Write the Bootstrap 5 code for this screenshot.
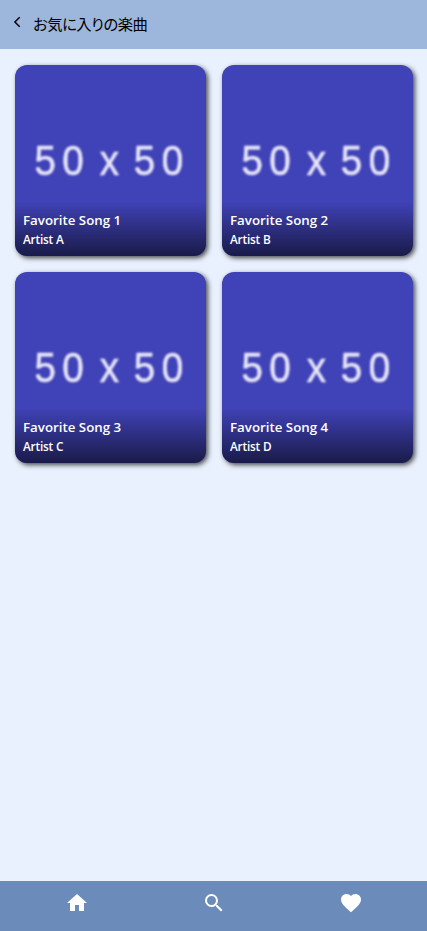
<!DOCTYPE html>
<html lang="ja">
<head>
<meta charset="utf-8">
<meta name="viewport" content="width=device-width, initial-scale=1">
<title>お気に入りの楽曲</title>
<link href="https://cdn.jsdelivr.net/npm/bootstrap@5.3.0/dist/css/bootstrap.min.css" rel="stylesheet">
<style>
body { background: #e9f1fe; font-family: "Open Sans", "Noto Sans", "Noto Sans CJK JP", sans-serif; }
.topbar { height: 49px; background: #9db6db; padding-left: 13px; color: #000; }
.back-icon { width: 8px; height: 12px; margin-top: -5px; }
.page-title { font: 400 15.3px/24px "Noto Sans CJK JP", sans-serif; font-feature-settings: "palt"; margin: -4px 0 0 12px; letter-spacing: -.45px; }
.songs { padding: 16px 14px 0 15px; }
.song-grid { display: grid; grid-template-columns: 191px 191px; gap: 16px; }
.song { height: 191px; border-radius: 12px; background: #4042b7; box-shadow: 2px 2px 5px rgba(0,0,0,.7); }
.cover-text { font: 42px "Liberation Sans", Arial, sans-serif; fill: #e6e6f8; stroke: #e6e6f8; stroke-width: .6px; filter: blur(.9px); }
.caption-area { height: 55px; padding: 10px 8px 0; background: linear-gradient(to top, rgba(0,0,0,.6), transparent); color: #fff; }
.song-name { font-size: 13.3px; line-height: 19px; font-weight: 600; }
.artist { font-size: 11.8px; line-height: 18px; font-weight: 600; letter-spacing: -.2px; }
.bottombar { height: 50px; background: #6b8cba; padding: 10px 8px 0; color: #fff; }
</style>
</head>
<body class="d-flex flex-column vh-100 overflow-hidden">
<header class="topbar d-flex align-items-center">
<svg class="back-icon" viewBox="0 0 8 12" fill="none" stroke="#000" stroke-width="1.5"><path d="M6.7 1.2 1.9 6l4.8 4.8"/></svg>
<h1 class="page-title">お気に入りの楽曲</h1>
</header>
<main class="songs flex-grow-1">
<div class="song-grid">
<article class="song position-relative overflow-hidden"><svg class="d-block" width="191" height="191"><text class="cover-text" transform="scale(.92 1)" x="21.3 51.5 77 92 117 129 159.5" y="110.5">50 x 50</text></svg><div class="caption-area position-absolute bottom-0 start-0 w-100"><div class="song-name">Favorite Song 1</div><div class="artist">Artist A</div></div></article>
<article class="song position-relative overflow-hidden"><svg class="d-block" width="191" height="191"><text class="cover-text" transform="scale(.92 1)" x="21.3 51.5 77 92 117 129 159.5" y="110.5">50 x 50</text></svg><div class="caption-area position-absolute bottom-0 start-0 w-100"><div class="song-name">Favorite Song 2</div><div class="artist">Artist B</div></div></article>
<article class="song position-relative overflow-hidden"><svg class="d-block" width="191" height="191"><text class="cover-text" transform="scale(.92 1)" x="21.3 51.5 77 92 117 129 159.5" y="110.5">50 x 50</text></svg><div class="caption-area position-absolute bottom-0 start-0 w-100"><div class="song-name">Favorite Song 3</div><div class="artist">Artist C</div></div></article>
<article class="song position-relative overflow-hidden"><svg class="d-block" width="191" height="191"><text class="cover-text" transform="scale(.92 1)" x="21.3 51.5 77 92 117 129 159.5" y="110.5">50 x 50</text></svg><div class="caption-area position-absolute bottom-0 start-0 w-100"><div class="song-name">Favorite Song 4</div><div class="artist">Artist D</div></div></article>
</div>
</main>
<nav class="bottombar d-flex">
<div class="col text-center"><svg width="24" height="24" viewBox="0 0 24 24" fill="currentColor" class="d-block mx-auto"><path d="M10 20v-6h4v6h5v-8h3L12 3 2 12h3v8z"/></svg></div>
<div class="col text-center"><svg width="24" height="24" viewBox="0 0 24 24" fill="currentColor" class="d-block mx-auto"><path d="M15.5 14h-.79l-.28-.27A6.47 6.47 0 0 0 16 9.500 6.500 6.500 0 1 0 9.500 16c1.610 0 3.090-.59 4.230-1.570l.27.28v.79l5 4.990L20.490 19l-4.990-5zm-6 0C7.010 14 5 11.990 5 9.500S7.010 5 9.500 5 14 7.010 14 9.500 11.990 14 9.500 14z"/></svg></div>
<div class="col text-center"><svg width="24" height="24" viewBox="0 0 24 24" fill="currentColor" class="d-block mx-auto"><path d="m12 21.350-1.450-1.320C5.400 15.360 2 12.280 2 8.500 2 5.420 4.420 3 7.500 3c1.740 0 3.410.81 4.500 2.090C13.090 3.810 14.760 3 16.500 3 19.580 3 22 5.420 22 8.500c0 3.780-3.400 6.860-8.550 11.540L12 21.350z"/></svg></div>
</nav>
<script src="https://cdn.jsdelivr.net/npm/bootstrap@5.3.0/dist/js/bootstrap.bundle.min.js"></script>
</body>
</html>
